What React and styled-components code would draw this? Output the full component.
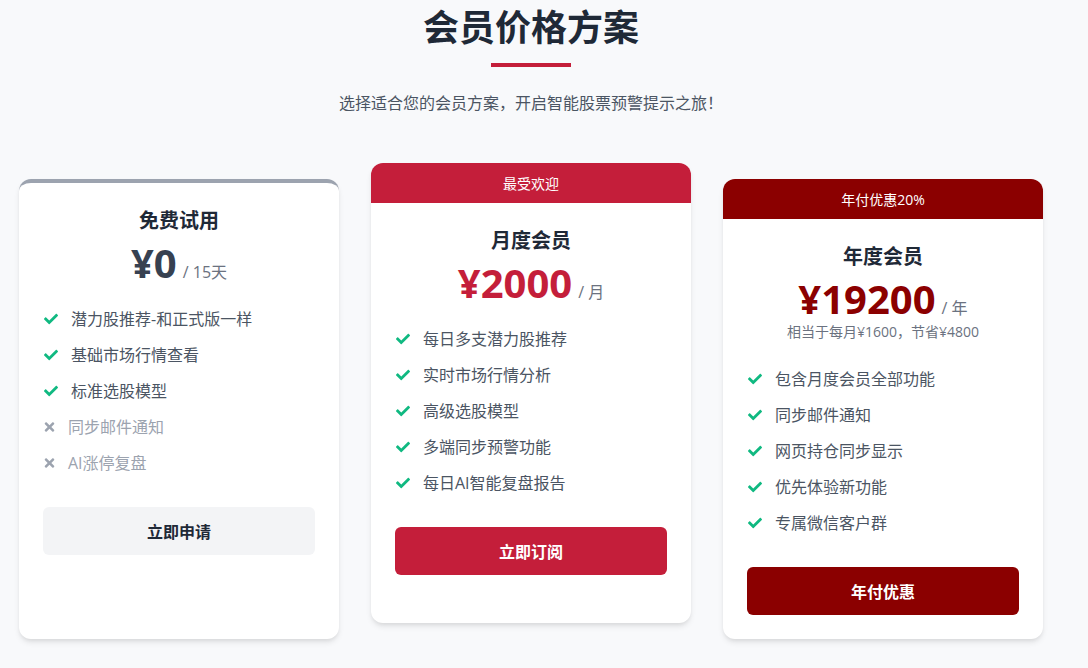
import React from "react";
import styled, { createGlobalStyle } from "styled-components";
import { FaCheck, FaTimes } from "react-icons/fa";

const GlobalStyle = createGlobalStyle`
  * { box-sizing: border-box; }
  body {
    margin: 0;
    background: #f8f9fb;
    font-family: "Open Sans", "Noto Sans CJK SC", sans-serif;
    color: #1f2937;
  }
`;

const plans = [
  {
    name: "免费试用",
    price: "¥0",
    period: "/ 15天",
    tone: "free",
    features: [
      { text: "潜力股推荐-和正式版一样", ok: true },
      { text: "基础市场行情查看", ok: true },
      { text: "标准选股模型", ok: true },
      { text: "同步邮件通知", ok: false },
      { text: "AI涨停复盘", ok: false },
    ],
    action: "立即申请",
  },
  {
    name: "月度会员",
    price: "¥2000",
    period: "/ 月",
    tone: "popular",
    badge: "最受欢迎",
    features: [
      { text: "每日多支潜力股推荐", ok: true },
      { text: "实时市场行情分析", ok: true },
      { text: "高级选股模型", ok: true },
      { text: "多端同步预警功能", ok: true },
      { text: "每日AI智能复盘报告", ok: true },
    ],
    action: "立即订阅",
  },
  {
    name: "年度会员",
    price: "¥19200",
    period: "/ 年",
    tone: "yearly",
    badge: "年付优惠20%",
    note: "相当于每月¥1600，节省¥4800",
    features: [
      { text: "包含月度会员全部功能", ok: true },
      { text: "同步邮件通知", ok: true },
      { text: "网页持仓同步显示", ok: true },
      { text: "优先体验新功能", ok: true },
      { text: "专属微信客户群", ok: true },
    ],
    action: "年付优惠",
  },
];

const toneColor = {
  free: "#374151",
  popular: "#c41e3a",
  yearly: "#8b0000",
};

export default function App() {
  return (
    <>
      <GlobalStyle />
      <Page>
        <Container>
          <Heading>会员价格方案</Heading>
          <Underline />
          <Subtitle>选择适合您的会员方案，开启智能股票预警提示之旅！</Subtitle>

          <Grid>
            {plans.map(plan => (
              <Card key={plan.name} tone={plan.tone}>
                {plan.badge && <Badge tone={plan.tone}>{plan.badge}</Badge>}
                <Body>
                  <PlanName>{plan.name}</PlanName>
                  <PriceRow>
                    <Price tone={plan.tone}>{plan.price}</Price>
                    <Period>{plan.period}</Period>
                  </PriceRow>
                  {plan.note && <Note>{plan.note}</Note>}
                  <Features>
                    {plan.features.map(f => (
                      <Feature key={f.text} ok={f.ok}>
                        <IconBox ok={f.ok}>
                          {f.ok ? <FaCheck size={14} /> : <FaTimes size={14} />}
                        </IconBox>
                        {f.text}
                      </Feature>
                    ))}
                  </Features>
                  <Button tone={plan.tone}>{plan.action}</Button>
                </Body>
              </Card>
            ))}
          </Grid>
        </Container>
      </Page>
    </>
  );
}

const Page = styled.div`
  padding: 6px 26px 30px 0;
`;

const Container = styled.div`
  max-width: 1024px;
  margin: 0 auto;
  display: flex;
  flex-direction: column;
  align-items: center;
`;

const Heading = styled.h1`
  margin: 0;
  font-size: 36px;
  line-height: 44px;
  font-weight: 700;
  color: #1f2937;
`;

const Underline = styled.div`
  width: 80px;
  height: 4px;
  margin-top: 13px;
  background: #c41e3a;
`;

const Subtitle = styled.p`
  margin: 24px 0 0;
  font-size: 16px;
  line-height: 24px;
  color: #4b5563;
`;

const Grid = styled.div`
  width: 100%;
  margin-top: 64px;
  display: grid;
  grid-template-columns: repeat(3, 1fr);
  gap: 32px;
  align-items: stretch;
`;

const Card = styled.div`
  background: #fff;
  border-radius: 12px;
  overflow: hidden;
  box-shadow: 0 4px 6px -1px rgba(0, 0, 0, 0.1), 0 2px 4px -1px rgba(0, 0, 0, 0.06);
  border-top: ${p => (p.tone === "free" ? "4px solid #9ca3af" : "none")};
  transform: ${p => (p.tone === "popular" ? "translateY(-16px)" : "none")};
  display: flex;
  flex-direction: column;
`;

const Badge = styled.div`
  height: 40px;
  display: flex;
  align-items: center;
  justify-content: center;
  font-size: 14px;
  color: #fff;
  background: ${p => toneColor[p.tone]};
`;

const Body = styled.div`
  padding: 24px 24px 24px;
  display: flex;
  flex-direction: column;
`;

const PlanName = styled.h3`
  margin: 0 0 8px;
  text-align: center;
  font-size: 20px;
  line-height: 28px;
  font-weight: 700;
  color: #1f2937;
`;

const PriceRow = styled.div`
  display: flex;
  justify-content: center;
  align-items: baseline;
`;

const Price = styled.span`
  font-size: 40px;
  line-height: 40px;
  font-weight: 700;
  color: ${p => toneColor[p.tone]};
`;

const Period = styled.span`
  margin-left: 6px;
  font-size: 16px;
  color: #6b7280;
`;

const Note = styled.div`
  margin: 4px 0 2px;
  text-align: center;
  font-size: 14px;
  line-height: 18px;
  color: #6b7280;
`;

const Features = styled.ul`
  list-style: none;
  margin: 18px 0 0;
  padding: 0;
`;

const Feature = styled.li`
  display: flex;
  align-items: center;
  padding: 6px 0;
  font-size: 16px;
  line-height: 24px;
  color: ${p => (p.ok ? "#4b5563" : "#9ca3af")};
`;

const IconBox = styled.span`
  display: inline-flex;
  width: ${p => (p.ok ? "14px" : "11px")};
  margin: 0 13px 0 1px;
  color: ${p => (p.ok ? "#10b981" : "#9ca3af")};
  svg {
    width: ${p => (p.ok ? "14px" : "11px")};
  }
`;

const Button = styled.button`
  margin-top: 26px;
  height: 48px;
  border: none;
  border-radius: 6px;
  font-family: inherit;
  font-size: 16px;
  font-weight: 700;
  cursor: pointer;
  background: ${p => (p.tone === "free" ? "#f3f4f6" : toneColor[p.tone])};
  color: ${p => (p.tone === "free" ? "#1f2937" : "#fff")};
`;
